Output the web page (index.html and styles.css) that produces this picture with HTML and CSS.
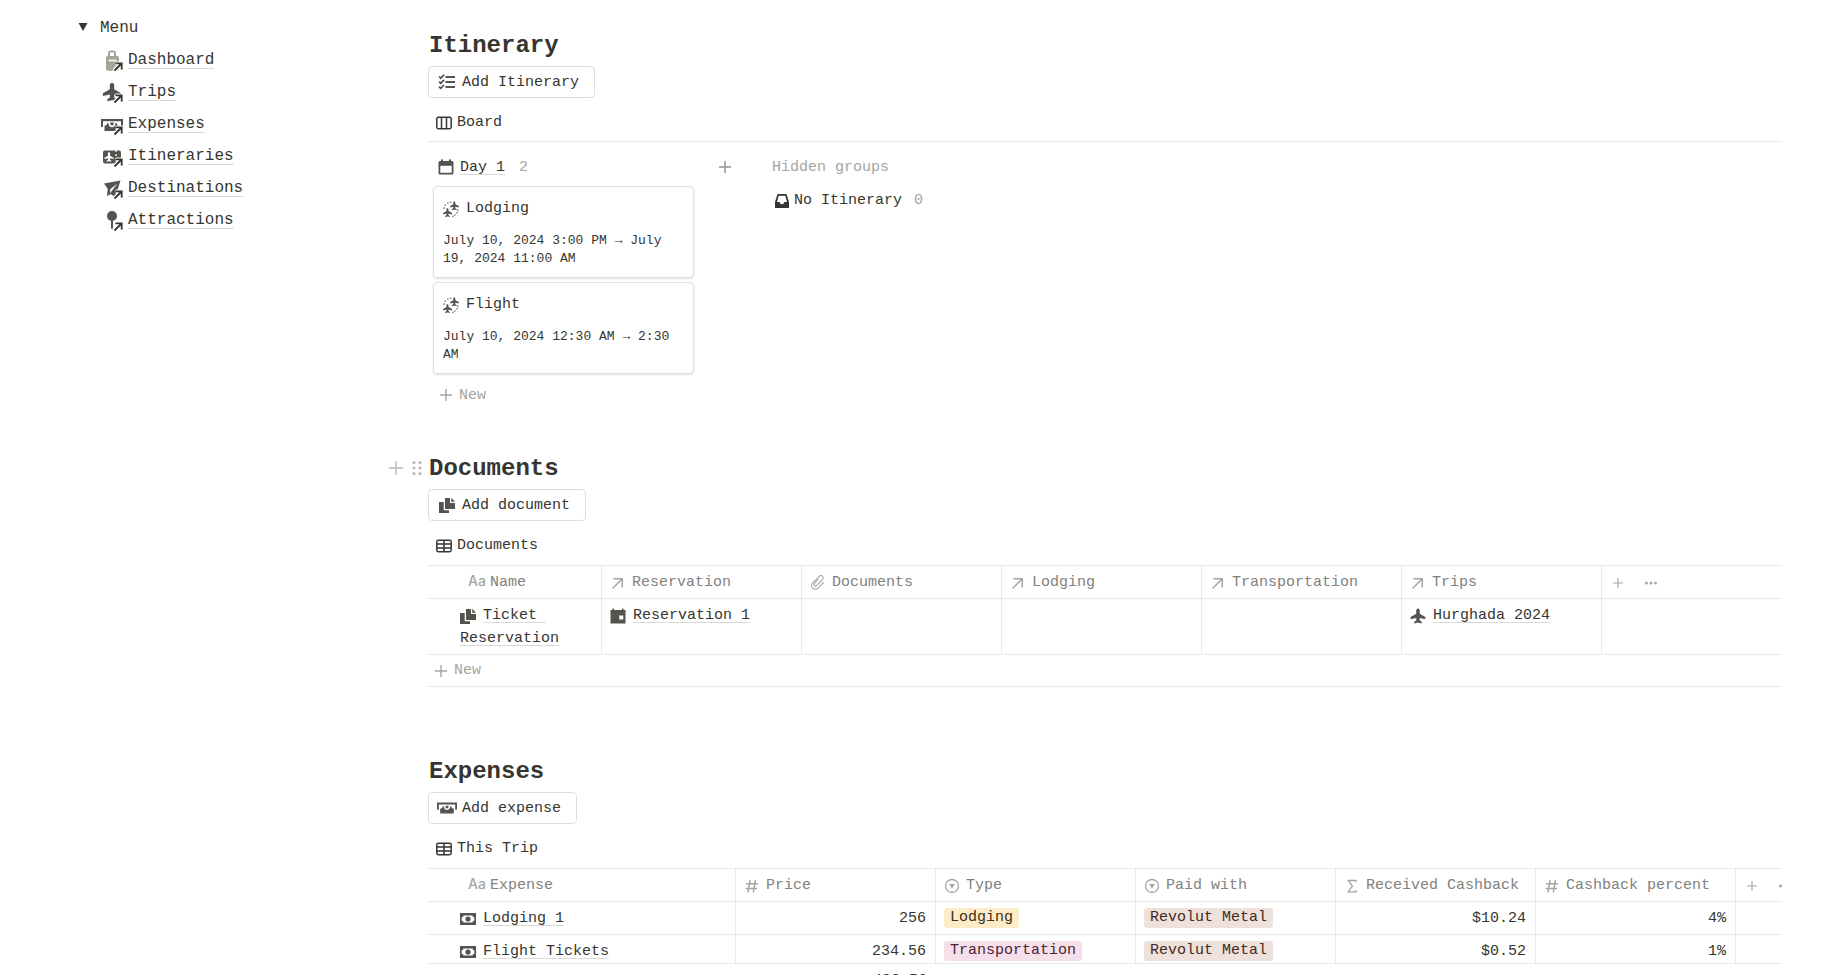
FILE: index.html
```html
<!DOCTYPE html>
<html lang="en">
<head>
    <meta charset="UTF-8">
    <meta name="viewport" content="width=device-width, initial-scale=1.0">
    <title>Hurghada 2024</title>
    <link rel="stylesheet" href="styles.css">
</head>
<body>
    <!-- Shared icons -->
    <svg class="sprite" aria-hidden="true">
        <symbol id="link-arrow" viewBox="0 0 24 24">
            <path d="M13 22.5l7.5-7M14.5 15.5h6v6.5" fill="none" stroke="#fff" stroke-width="4"/>
            <path d="M13.5 22.5l7-7M14.5 15.3h6.2v6.2" fill="none" stroke="#37352f" stroke-width="1.8"/>
        </symbol>
        <symbol id="plane" viewBox="0 0 24 24">
            <path d="M23 16.800v-3.200l-8.400-4.900V3.800C14.600 2 13.300.8 12 .8S9.400 2 9.400 3.800v4.900L1 13.600v3.200l8.400-1.900v3.800l-3 2.100V23.200l5.600-1.300 5.600 1.300v-2.400l-3-2.100v-3.800z"/>
        </symbol>
        <symbol id="cash" viewBox="0 0 22 12">
            <path d="M0 0h22v8h-2V2.200H2V8H0z"/>
            <path d="M3.500 6.800c1.600-.2 2.600-1.200 2.800-2.800h1c.4 2.800 1.800 4.200 3.700 4.200s3.300-1.400 3.700-4.200h1c.2 1.600 1.200 2.600 2.800 2.800V12h-15z"/>
            <path d="M9.200 3.600h3.600c0 2-.6 3-1.800 3s-1.800-1-1.800-3z"/>
        </symbol>
        <symbol id="docs" viewBox="0 0 16 16">
            <path d="M6 1h5v5h5v6H6zM12.200.8L16 4.800h-3.800z"/>
            <path d="M0 5h4.700v8.300h5.300V16H0z"/>
        </symbol>
        <symbol id="bill" viewBox="0 0 16 12">
            <path fill-rule="evenodd" d="M0 0h16v12H0zM3.500 2.500c0 1-.8 1.800-1.800 1.800v3.400c1 0 1.800.8 1.800 1.800h9c0-1 .8-1.800 1.800-1.800V4.300c-1 0-1.800-.8-1.800-1.800z"/>
            <circle cx="8" cy="6" r="2.600"/>
        </symbol>
        <symbol id="plus" viewBox="0 0 12 12">
            <path d="M6 0v12M0 6h12" fill="none" stroke="currentColor" stroke-width="1.400"/>
        </symbol>
        <symbol id="table" viewBox="0 0 16 14">
            <path d="M2.500 1.300h11a1.700 1.700 0 0 1 1.700 1.700v8a1.700 1.700 0 0 1-1.700 1.700h-11A1.700 1.700 0 0 1 .8 11V3a1.700 1.700 0 0 1 1.700-1.700zM.8 5.100h14.400M.8 8.900h14.400M8 1.300v11.400" fill="none" stroke="currentColor" stroke-width="1.500"/>
        </symbol>
        <symbol id="relation" viewBox="0 0 16 16">
            <path d="M2.500 13.500L12 4M3.500 3.700h8.800v8.800" fill="none" stroke="currentColor" stroke-width="1.500"/>
        </symbol>
        <symbol id="number" viewBox="0 0 16 16">
            <path d="M6.200 2L4 14.500M11.500 2L9.300 14.500M2.200 5.800h11.600M1.600 10.500h11.600" fill="none" stroke="currentColor" stroke-width="1.500"/>
        </symbol>
        <symbol id="select" viewBox="0 0 16 16">
            <circle cx="8" cy="8" r="6.500" fill="none" stroke="currentColor" stroke-width="1.300"/>
            <path d="M5 6h6l-3 4.800z"/>
        </symbol>
        <symbol id="dots" viewBox="0 0 14 14">
            <circle cx="2.500" cy="7" r="1.500"/><circle cx="7" cy="7" r="1.500"/><circle cx="11.500" cy="7" r="1.500"/>
        </symbol>
        <symbol id="flights" viewBox="0 0 16 16">
            <path d="M11.300.5c.6 0 1 .5 1 1.100V3.200l3.500 1.900v1.500l-3.500-.9v1.600l1.300.8v1l-2.300-.4-2.300.4v-1l1.300-.8V5.700l-3.100.9V5.100l3.100-1.900V1.600c0-.6.4-1.100 1-1.100z"/>
            <path d="M4.500 7.300c.6 0 1 .5 1 1.100V10L9 11.900v1.500l-3.500-.9v1.600l1.300.8v1l-2.300-.4-2.300.4v-1l1.300-.8v-1.600L.2 13.400v-1.500L3.500 10V8.400c0-.6.4-1.100 1-1.100z"/>
            <path d="M.4 7.200l1.300-.3M1.700 3.800l1 .7M4.600 1.500l.6 1M7.600.8v1M15.400 9.200l-1.200.2M14.500 12l-1-.6M12.200 14.500l-.6-1M9.800 14.800v1" fill="none" stroke="currentColor" stroke-width="1.400"/>
        </symbol>
    </svg>

    <div class="page">
        <aside class="sidebar">
            <details open>
                <summary>
                    <svg class="toggle" viewBox="0 0 10 10"><path d="M.5 0h9L5 8z"/></svg>
                    Menu
                </summary>
                <nav class="menu">
                    <a href="#">
                        <svg class="menu-icon" viewBox="0 0 24 24">
                            <path fill="#a8a39b" fill-rule="evenodd" d="M7 8V5a2.500 2.500 0 0 1 2.500-2.500h3A2.500 2.500 0 0 1 15 5v3h1.500a1.500 1.500 0 0 1 1.500 1.500V21a1.500 1.500 0 0 1-1.500 1.500H11V23H8v-.500H6.500A1.500 1.500 0 0 1 5 21V9.500A1.500 1.500 0 0 1 6.500 8zM9 8h4V4.500H9zM7.500 11.700v1.500h8v-1.500z"/>
                            <use href="#link-arrow"/>
                        </svg>
                        <span>Dashboard</span>
                    </a>
                    <a href="#">
                        <svg class="menu-icon" viewBox="0 0 24 24"><use href="#plane" x="1" y="2" width="20" height="20"/><use href="#link-arrow"/></svg>
                        <span>Trips</span>
                    </a>
                    <a href="#">
                        <svg class="menu-icon" viewBox="0 0 24 24"><use href="#cash" x="0" y="7" width="22" height="12"/><use href="#link-arrow"/></svg>
                        <span>Expenses</span>
                    </a>
                    <a href="#">
                        <svg class="menu-icon" viewBox="0 0 24 24">
                            <rect x="2" y="6.500" width="18" height="13" rx="2"/>
                            <path d="M15 6v2M15 10v2M15 14v2" stroke="#fff" stroke-width="1.300"/>
                            <g fill="#fff"><use href="#plane" x="3" y="8" width="10" height="10"/></g>
                            <use href="#link-arrow"/>
                        </svg>
                        <span>Itineraries</span>
                    </a>
                    <a href="#">
                        <svg class="menu-icon" viewBox="0 0 24 24">
                            <path fill-rule="evenodd" d="M19.500 4.500L3 7.500l3.700 5.300L6 20l4-2 4 3.500zM16.500 7.500L9 17.200l.2-4z"/>
                            <use href="#link-arrow"/>
                        </svg>
                        <span>Destinations</span>
                    </a>
                    <a href="#">
                        <svg class="menu-icon" viewBox="0 0 24 24"><circle cx="11" cy="8" r="5"/><path d="M10 12h2v8l-1 1.500-1-1.500z"/><use href="#link-arrow"/></svg>
                        <span>Attractions</span>
                    </a>
                </nav>
            </details>
        </aside>

        <main class="content">
            <section class="block">
                <h2>Itinerary</h2>
                <button class="action">
                    <svg class="action-icon" viewBox="0 0 20 20">
                        <path d="M8.500 5H18M8.500 10H18M8.500 15H18" fill="none" stroke="currentColor" stroke-width="2"/>
                        <path d="M2 4.500l1.700 1.700L7 2.800M2 9.500l1.700 1.700L7 7.800M2 14.700l1.700 1.700L7 13" fill="none" stroke="currentColor" stroke-width="1.700"/>
                    </svg>
                    Add Itinerary
                </button>
                <div class="tabs tabs-line">
                    <button class="tab">
                        <svg class="tab-icon" viewBox="0 0 16 14"><path d="M2.500 1.300h11a1.700 1.700 0 0 1 1.700 1.700v8a1.700 1.700 0 0 1-1.700 1.700h-11A1.700 1.700 0 0 1 .8 11V3a1.700 1.700 0 0 1 1.700-1.700zM5.500 1.300v11.400M10.500 1.300v11.400" fill="none" stroke="currentColor" stroke-width="1.500"/></svg>
                        Board
                    </button>
                </div>
                <div class="board">
                    <div class="group">
                        <div class="group-head">
                            <svg class="icon" viewBox="0 0 16 16"><path fill-rule="evenodd" d="M3 .5h2V2h6V.5h2V2h1a1.500 1.500 0 0 1 1.500 1.500V14a1.500 1.500 0 0 1-1.500 1.500H2A1.500 1.500 0 0 1 .5 14V3.500A1.500 1.500 0 0 1 2 2h1zM2.300 6.800v6.900h11.400V6.800z"/></svg>
                            <a class="link" href="#">Day 1</a>
                            <span class="count">2</span>
                        </div>
                        <div class="cards">
                            <article class="card">
                                <h3><svg class="icon" viewBox="0 0 16 16"><use href="#flights"/></svg>Lodging</h3>
                                <p>July 10, 2024 3:00 PM → July 19, 2024 11:00 AM</p>
                            </article>
                            <article class="card">
                                <h3><svg class="icon" viewBox="0 0 16 16"><use href="#flights"/></svg>Flight</h3>
                                <p>July 10, 2024 12:30 AM → 2:30 AM</p>
                            </article>
                        </div>
                        <button class="new"><svg class="plus"><use href="#plus"/></svg>New</button>
                    </div>
                    <button class="add-group" aria-label="Add group"><svg class="plus"><use href="#plus"/></svg></button>
                    <div class="hidden-groups">
                        <div class="hidden-title">Hidden groups</div>
                        <div class="hidden-row">
                            <svg class="icon inbox" viewBox="0 0 16 16"><path fill-rule="evenodd" d="M3.500 1h9L15 9v6H1V9zM4.700 2.800L3 9h2.700c.3 1.500 1 2.200 2.300 2.200s2-.7 2.300-2.200H13l-1.700-6.200z"/></svg>
                            <span>No Itinerary</span>
                            <span class="count">0</span>
                        </div>
                    </div>
                </div>
            </section>

            <section class="block documents">
                <div class="heading-row">
                    <button class="handle" aria-label="Add block"><svg viewBox="0 0 14 14"><path d="M7 0v14M0 7h14" fill="none" stroke="currentColor" stroke-width="1.400"/></svg></button>
                    <button class="handle" aria-label="Drag block"><svg viewBox="0 0 14 14"><circle cx="3" cy="1.500" r="1.500"/><circle cx="9" cy="1.500" r="1.500"/><circle cx="3" cy="7" r="1.500"/><circle cx="9" cy="7" r="1.500"/><circle cx="3" cy="12.500" r="1.500"/><circle cx="9" cy="12.500" r="1.500"/></svg></button>
                    <h2>Documents</h2>
                </div>
                <button class="action">
                    <svg class="action-icon" viewBox="0 0 20 20"><use href="#docs" x="2" y="2" width="16" height="16"/></svg>
                    Add document
                </button>
                <div class="tabs">
                    <button class="tab"><svg class="tab-icon"><use href="#table"/></svg>Documents</button>
                </div>
                <div class="table-wrap">
                    <table>
                        <colgroup>
                            <col class="col-name"><col class="col"><col class="col"><col class="col"><col class="col"><col class="col"><col>
                        </colgroup>
                        <thead>
                            <tr>
                                <th><span class="aa">Aa</span>Name</th>
                                <th><svg class="icon"><use href="#relation"/></svg>Reservation</th>
                                <th><svg class="icon" viewBox="0 0 16 16"><path d="M8.500 4.200L4.300 8.400a1.500 1.500 0 0 0 2.200 2.200l6-6a2.300 2.300 0 0 0-3.300-3.300l-6.500 6.500a3.700 3.700 0 0 0 5.300 5.300l5.800-5.800" fill="none" stroke="currentColor" stroke-width="1.100"/></svg>Documents</th>
                                <th><svg class="icon"><use href="#relation"/></svg>Lodging</th>
                                <th><svg class="icon"><use href="#relation"/></svg>Transportation</th>
                                <th><svg class="icon"><use href="#relation"/></svg>Trips</th>
                                <th class="tools">
                                    <button aria-label="Add property"><svg><use href="#plus"/></svg></button>
                                    <button aria-label="More"><svg class="dots"><use href="#dots"/></svg></button>
                                </th>
                            </tr>
                        </thead>
                        <tbody>
                            <tr>
                                <td><svg class="icon"><use href="#docs"/></svg><a class="link" href="#">Ticket Reservation</a></td>
                                <td><svg class="icon" viewBox="0 0 16 16"><path fill-rule="evenodd" d="M2.500.5H4V2h8V.5h1.500V2h2v13.500H.5V2h2zM9.300 7.500v4h4v-4z"/></svg><a class="link" href="#">Reservation 1</a></td>
                                <td></td>
                                <td></td>
                                <td></td>
                                <td><svg class="icon"><use href="#plane"/></svg><a class="link" href="#">Hurghada 2024</a></td>
                                <td></td>
                            </tr>
                        </tbody>
                    </table>
                    <button class="new new-row"><svg class="plus"><use href="#plus"/></svg>New</button>
                </div>
            </section>

            <section class="block">
                <h2>Expenses</h2>
                <button class="action">
                    <svg class="action-icon" viewBox="0 0 20 20"><use href="#cash" x="0" y="4" width="20" height="12"/></svg>
                    Add expense
                </button>
                <div class="tabs">
                    <button class="tab"><svg class="tab-icon"><use href="#table"/></svg>This Trip</button>
                </div>
                <div class="table-wrap">
                    <table class="expenses">
                        <colgroup>
                            <col class="col-expense"><col class="col"><col class="col"><col class="col"><col class="col"><col class="col"><col>
                        </colgroup>
                        <thead>
                            <tr>
                                <th><span class="aa">Aa</span>Expense</th>
                                <th><svg class="icon"><use href="#number"/></svg>Price</th>
                                <th><svg class="icon"><use href="#select"/></svg>Type</th>
                                <th><svg class="icon"><use href="#select"/></svg>Paid with</th>
                                <th><svg class="icon" viewBox="0 0 16 16"><path d="M12 4V2.500H4.200L8.500 8l-4.300 5.800H12v-1.500" fill="none" stroke="currentColor" stroke-width="1.300"/></svg>Received Cashback</th>
                                <th><svg class="icon"><use href="#number"/></svg>Cashback percent</th>
                                <th class="tools">
                                    <button aria-label="Add property"><svg><use href="#plus"/></svg></button>
                                    <button aria-label="More"><svg class="dots"><use href="#dots"/></svg></button>
                                </th>
                            </tr>
                        </thead>
                        <tbody>
                            <tr>
                                <td><svg class="icon"><use href="#bill"/></svg><a class="link" href="#">Lodging 1</a></td>
                                <td class="num">256</td>
                                <td><span class="tag yellow">Lodging</span></td>
                                <td><span class="tag brown">Revolut Metal</span></td>
                                <td class="num">$10.24</td>
                                <td class="num">4%</td>
                                <td></td>
                            </tr>
                            <tr>
                                <td><svg class="icon"><use href="#bill"/></svg><a class="link" href="#">Flight Tickets</a></td>
                                <td class="num">234.56</td>
                                <td><span class="tag pink">Transportation</span></td>
                                <td><span class="tag brown">Revolut Metal</span></td>
                                <td class="num">$0.52</td>
                                <td class="num">1%</td>
                                <td></td>
                            </tr>
                        </tbody>
                        <tfoot>
                            <tr>
                                <td></td>
                                <td class="num">490.56</td>
                                <td></td>
                                <td></td>
                                <td></td>
                                <td></td>
                                <td></td>
                            </tr>
                        </tfoot>
                    </table>
                </div>
            </section>
        </main>
    </div>
</body>
</html>
```
FILE: styles.css
```css
* {
    box-sizing: border-box;
}
body {
    margin: 0;
    background: #fff;
    color: #37352f;
    font-family: "Liberation Mono", monospace;
    font-size: 15px;
    line-height: 23px;
}
h2, h3, p {
    margin: 0;
}
a {
    color: inherit;
    text-decoration: none;
}
button {
    margin: 0;
    padding: 0;
    border: none;
    background: none;
    color: inherit;
    font: inherit;
    cursor: pointer;
}
svg {
    flex: none;
    fill: currentColor;
}
.sprite {
    display: none;
}
.page {
    display: flex;
    height: 100vh;
    overflow: hidden;
}

/* Sidebar */
.sidebar {
    flex: 0 0 388px;
    padding: 12px 0 0 78px;
    font-size: 16px;
}
summary {
    display: flex;
    align-items: center;
    gap: 12px;
    height: 32px;
    list-style: none;
    cursor: pointer;
}
.toggle {
    width: 10px;
    height: 10px;
}
.menu {
    padding-left: 23px;
}
.menu a {
    display: flex;
    align-items: center;
    gap: 3px;
    height: 32px;
}
.menu-icon {
    width: 24px;
    height: 24px;
    fill: #55534e;
}
.menu span, .link {
    text-decoration: underline;
    text-decoration-color: #d9d9d7;
    text-decoration-thickness: 1px;
    text-decoration-skip-ink: none;
    text-underline-offset: 3px;
}
.menu span {
    text-underline-offset: 4px;
}

/* Content */
.content {
    flex: 1;
    min-width: 0;
    padding: 30px 40px 0;
}
.block {
    margin-bottom: 42px;
}
.documents {
    margin-bottom: 69px;
}
h2 {
    margin-bottom: 4px;
    padding-left: 1px;
    font-size: 24px;
    line-height: 32px;
}
.heading-row {
    display: flex;
    margin-left: -39px;
}
.handle {
    display: flex;
    align-items: center;
    height: 30px;
    margin-right: 8px;
    color: #b9b8b4;
}
.handle + .handle {
    margin-right: 3px;
}
.handle svg {
    width: 14px;
    height: 14px;
}
.action {
    display: flex;
    align-items: center;
    gap: 5px;
    height: 32px;
    padding: 0 15px 0 8px;
    border: 1px solid #dededc;
    border-radius: 4px;
}
.action-icon {
    width: 20px;
    height: 20px;
    color: #55534e;
}
.tabs {
    height: 44px;
    padding: 13px 8px 0;
}
.tabs-line {
    border-bottom: 1px solid #e9e9e7;
}
.tab {
    display: flex;
    align-items: center;
    gap: 5px;
}
.tab-icon {
    width: 16px;
    height: 14px;
}
.icon {
    width: 16px;
    height: 16px;
    color: #55534e;
}
.plus {
    width: 12px;
    height: 12px;
}

/* Board */
.board {
    display: flex;
    padding: 9px 0 0 5px;
}
.group {
    width: 261px;
}
.group-head {
    display: flex;
    align-items: center;
    gap: 6px;
    height: 32px;
    margin-bottom: 3px;
    padding-left: 5px;
}
.count {
    margin-left: 8px;
    color: #a6a5a1;
}
.cards {
    display: flex;
    flex-direction: column;
    gap: 4px;
}
.card {
    height: 92px;
    padding: 10px 9px;
    border: 1px solid #e0e0de;
    border-radius: 4px;
    box-shadow: 0 1px 2px rgba(15, 15, 15, 0.12);
}
.card h3 {
    display: flex;
    align-items: center;
    gap: 7px;
    font-size: 15px;
    font-weight: normal;
}
.card p {
    margin-top: 12px;
    font-size: 13px;
    line-height: 18px;
}
.new {
    display: flex;
    align-items: center;
    gap: 7px;
    height: 32px;
    margin-top: 5px;
    padding-left: 7px;
    color: #a6a5a1;
}
.add-group {
    display: flex;
    align-items: center;
    justify-content: center;
    width: 24px;
    height: 32px;
    margin: 0 35px 0 19px;
    color: #91918e;
}
.hidden-title, .hidden-row {
    display: flex;
    align-items: center;
    height: 33px;
}
.hidden-title {
    color: #a6a5a1;
}
.hidden-row {
    gap: 4px;
    padding-left: 2px;
}
.inbox {
    color: #37352f;
}

/* Tables */
.table-wrap {
    overflow: clip;
    border-top: 1px solid #e9e9e7;
}
table {
    width: 100%;
    table-layout: fixed;
    border-spacing: 0;
}
.expenses {
    min-width: 1428px;
}
.col-name {
    width: 174px;
}
.col-expense {
    width: 308px;
}
.col {
    width: 200px;
}
th, td {
    padding: 5px 9px 4px 8px;
    border-right: 1px solid #e9e9e7;
    border-bottom: 1px solid #e9e9e7;
    text-align: left;
    vertical-align: top;
}
th:last-child, td:last-child {
    border-right: none;
}
th {
    color: #82817d;
    font-weight: normal;
    white-space: nowrap;
}
th:first-child {
    padding-left: 40px;
}
td:first-child {
    padding-left: 32px;
}
th .icon, td .icon {
    margin-top: 4px;
    margin-right: 6px;
    vertical-align: top;
}
th .icon {
    color: #a6a5a1;
}
td .icon {
    margin-right: 7px;
}
td .link {
    white-space: pre-wrap;
}
.aa {
    margin-right: 4px;
    color: #a6a5a1;
    font-family: Inter, sans-serif;
    font-size: 14px;
    font-weight: 500;
    line-height: 20px;
}
.tools {
    color: #a6a5a1;
}
.tools button {
    margin-right: 9px;
}
.tools svg {
    width: 16px;
    height: 10px;
    margin-top: 7px;
    vertical-align: top;
}
.tools .dots {
    width: 14px;
    height: 14px;
    margin-top: 5px;
}
.num {
    text-align: right;
}
.tag {
    display: inline-block;
    margin-top: 1px;
    padding: 0 6px;
    border-radius: 3px;
    line-height: 20px;
    vertical-align: top;
}
.yellow {
    background: #fdecc8;
    color: #402c1b;
}
.pink {
    background: #f5e0e9;
    color: #4c2337;
}
.brown {
    background: #eee0da;
    color: #442a1e;
}
.new-row {
    width: 100%;
    margin: 0;
    border-bottom: 1px solid #e9e9e7;
}
/* Totals stay pinned to the lower edge of the page */
tfoot td {
    position: sticky;
    bottom: -22px;
    border-top: 1px solid #e9e9e7;
    border-right: none;
    background: #fff;
}
```
